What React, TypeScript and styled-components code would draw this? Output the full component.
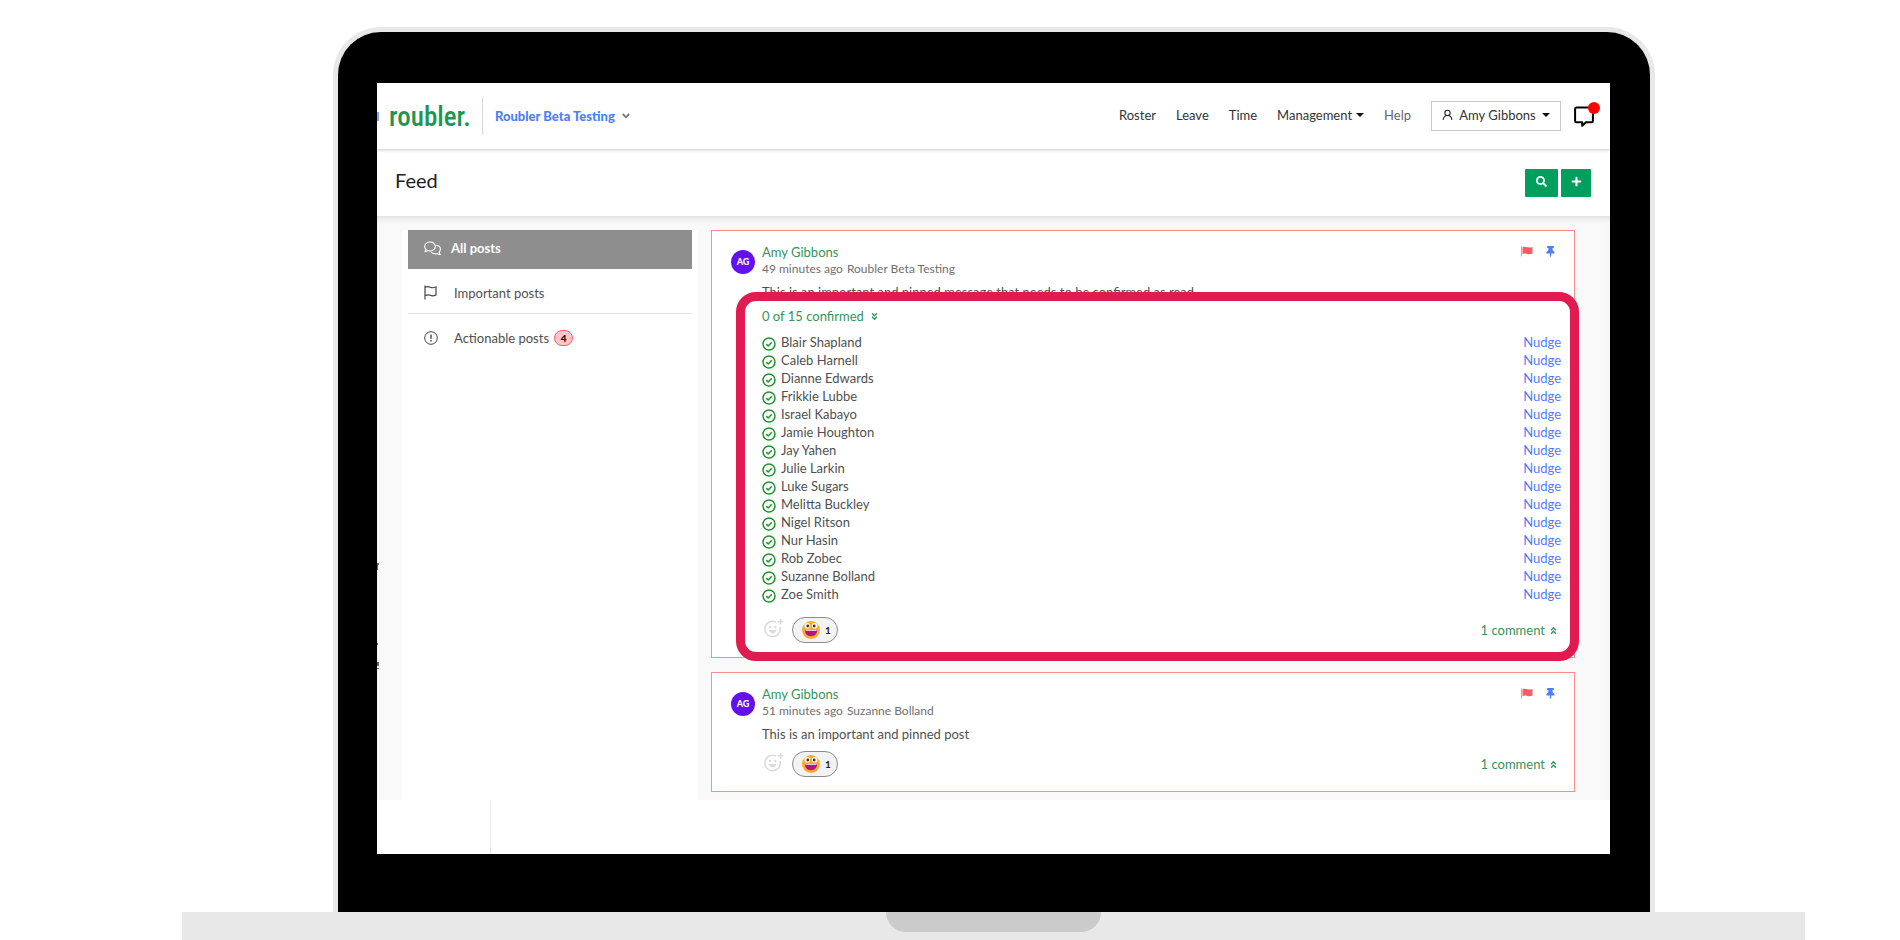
import React from "react";
import styled, { createGlobalStyle } from "styled-components";
import { FaAngleDoubleDown, FaAngleDoubleUp, FaPlus, FaSearch, FaThumbtack } from "react-icons/fa";

const GlobalStyle = createGlobalStyle`
  * { box-sizing: border-box; }
  body { margin: 0; background: #fff; font-family: Lato, "Open Sans", sans-serif; color: #505050; }
  button, select { font: inherit; color: inherit; }
  a { color: inherit; text-decoration: none; }
  h1, h2, p, ul { margin: 0; padding: 0; font-weight: 400; }
  ul { list-style: none; }
  svg { display: block; flex: none; }
`;

const Page = styled.div`
  min-height: 100vh;
  padding-top: 27px;
  overflow: hidden;
  display: flex;
  flex-direction: column;
`;

const Lid = styled.div`
  flex: 1;
  margin: 0 245px 0 333px;
  padding: 51px 40px 58px 39px;
  border: 5px solid #e8e8e8;
  border-bottom: 0;
  border-radius: 48px 48px 0 0;
  background: #000;
`;

const Base = styled.div`
  height: 28px;
  margin: 0 95px 0 182px;
  background: #e8e8e8;
  display: flex;
  justify-content: center;
`;

const Notch = styled.div`
  width: 215px;
  height: 20px;
  border-radius: 0 0 20px 20px;
  background: #cbcbcb;
`;

const Screen = styled.div`
  position: relative;
  background: #fff;
  overflow: hidden;
`;

const TopBar = styled.header`
  height: 66px;
  display: flex;
  align-items: center;
  padding-right: 16px;
  box-shadow: 0 1px 3px rgba(0, 0, 0, 0.22);
  position: relative;
`;

const TabEdge = styled.span`
  width: 2px;
  height: 9px;
  background: #7da2f7;
`;

const Logo = styled.a`
  width: 94px;
  padding: 2px 0 0 10px;
  font: 500 27px/36px "Liberation Sans Narrow", "Roboto Condensed", Roboto, sans-serif;
  color: #1f9650;
`;

const Company = styled.button`
  height: 37px;
  display: flex;
  align-items: center;
  gap: 7px;
  margin-left: 9px;
  padding: 0 12px;
  border: 0;
  border-left: 1px solid #d8d8d8;
  background: none;
  font-size: 13px;
  font-weight: 900;
  color: #4a80f8;
`;

const Nav = styled.nav`
  margin-left: auto;
  display: flex;
  align-items: center;
  gap: 20px;
  font-size: 13px;
  color: #333;
`;

const NavLink = styled.a<{ $muted?: boolean }>`
  display: flex;
  align-items: center;
  gap: 4px;
  padding-bottom: 3px;
  line-height: 18px;
  color: ${(p) => (p.$muted ? "#666" : "#333")};
`;

const Caret = styled.span`
  border: 4px solid transparent;
  border-top-color: #111;
  border-bottom: 0;
`;

const UserButton = styled.button`
  width: 130px;
  height: 30px;
  display: flex;
  align-items: center;
  justify-content: space-between;
  padding: 0 10px 2px;
  border: 1px solid #c8c8c8;
  background: #fff;
  font-size: 13px;
  color: #333;
`;

const ChatButton = styled.button`
  position: relative;
  margin-left: -7px;
  padding: 0;
  border: 0;
  background: none;
`;

const Alert = styled.span`
  position: absolute;
  top: -4px;
  right: -6px;
  width: 12px;
  height: 12px;
  border-radius: 50%;
  background: #f00;
`;

const TitleBar = styled.div`
  height: 67px;
  display: flex;
  align-items: center;
  gap: 3px;
  padding: 0 19px 0 18px;
`;

const Title = styled.h1`
  flex: 1;
  font-size: 20px;
  line-height: 24px;
  padding-bottom: 6px;
  color: #222;
`;

const Action = styled.button<{ $wide?: boolean }>`
  width: ${(p) => (p.$wide ? 33 : 30)}px;
  height: 28px;
  display: grid;
  place-items: center;
  padding: 0 0 2px;
  border: 0;
  border-radius: 1px;
  background: #009f5d;
  color: #fff;
`;

const Content = styled.div`
  display: flex;
  gap: 13px;
  min-height: 584px;
  padding: 14px 35px 0 25px;
  background: #f9f9f9;
  box-shadow: inset 0 6px 6px -3px rgba(0, 0, 0, 0.1);
`;

const Sidebar = styled.aside`
  width: 296px;
  padding: 0 6px;
  background: #fff;
`;

const SideItem = styled.a<{ $active?: boolean; $ruled?: boolean }>`
  height: ${(p) => (p.$active ? 39 : 45)}px;
  display: flex;
  align-items: center;
  gap: ${(p) => (p.$active ? 10 : 16)}px;
  padding: ${(p) => (p.$active ? "0 16px 3px" : "3px 16px 0")};
  font-size: 13px;
  line-height: 18px;
  background: ${(p) => (p.$active ? "#8e8e8e" : "none")};
  color: ${(p) => (p.$active ? "#fff" : "#505050")};
  font-weight: ${(p) => (p.$active ? 700 : 400)};
  border-bottom: ${(p) => (p.$ruled ? "1px solid #e2e2e2" : "0")};

  svg { margin-right: ${(p) => (p.$ruled ? 1 : 0)}px; }
`;

const Count = styled.span`
  width: 19px;
  height: 16px;
  margin-left: -11px;
  border: 1px solid #fb5f66;
  border-radius: 8px;
  background: #fdc6ca;
  font-size: 10px;
  font-weight: 900;
  line-height: 14px;
  text-align: center;
  color: #111;
`;

const Feed = styled.main`
  flex: 1;
  display: flex;
  flex-direction: column;
  gap: 14px;
  padding-bottom: 8px;
`;

const Card = styled.article`
  position: relative;
  display: flex;
  gap: 7px;
  padding: 12px 13px 14px 19px;
  border: 1px solid #fb8f8f;
  background: #fff;
`;

const Avatar = styled.div`
  width: 24px;
  height: 24px;
  margin-top: 7px;
  border-radius: 50%;
  background: #6310f0;
  color: #fff;
  font-size: 9px;
  font-weight: 900;
  line-height: 24px;
  text-align: center;
`;

const Body = styled.div`
  flex: 1;
  font-size: 13px;
  line-height: 18px;
`;

const Head = styled.div`
  display: flex;
  justify-content: space-between;
`;

const Author = styled.a`
  color: #36935a;
`;

const Marks = styled.div`
  display: flex;
  gap: 12px;
  padding: 3px 5px 0 0;
`;

const Meta = styled.p`
  display: flex;
  gap: 4px;
  font-size: 12px;
  line-height: 16px;
  color: #707070;
`;

const Message = styled.p`
  margin-top: 6px;
`;

const Confirmed = styled.button`
  display: flex;
  align-items: center;
  gap: 6px;
  margin-top: 6px;
  padding: 0;
  border: 0;
  background: none;
  line-height: 18px;
  color: #36935a;
`;

const People = styled.ul`
  margin: 8px 0 14px;
`;

const Person = styled.li`
  display: flex;
  align-items: center;
  gap: 5px;

  svg { margin-top: 3px; }
`;

const Nudge = styled.button`
  margin-left: auto;
  padding: 0;
  border: 0;
  background: none;
  line-height: 18px;
  color: #4f7df9;
`;

const Reactions = styled.div`
  display: flex;
  align-items: center;
  gap: 8px;
  margin-top: 8px;
`;

const IconButton = styled.button`
  padding: 0 0 4px 2px;
  border: 0;
  background: none;
`;

const Pill = styled.button`
  width: 46px;
  height: 26px;
  display: flex;
  align-items: center;
  gap: 4px;
  padding: 0 0 0 8px;
  border: 1px solid #8c8c8c;
  border-radius: 13px;
  background: #f3f3f3;
  font-size: 10px;
  font-weight: 700;
  color: #222;
`;

const Comments = styled.button`
  display: flex;
  align-items: center;
  gap: 4px;
  margin-left: auto;
  padding: 0 3px 0 0;
  border: 0;
  background: none;
  color: #36935a;
`;

const Highlight = styled.div`
  position: absolute;
  inset: 61px -5px -4px 24px;
  border: 9px solid #e11a50;
  border-radius: 20px;
  pointer-events: none;
`;

const Footer = styled.footer`
  height: 54px;
  display: flex;
`;

const FooterColumn = styled.div`
  width: 114px;
  border-right: 1px solid #e8e8e8;
`;

const EdgeMarks = styled.svg`
  position: absolute;
  left: 0;
  top: 479px;
`;

const UserIcon = () => (
  <svg width="11" height="12" viewBox="0 0 12 12" fill="none" stroke="#222" strokeWidth="1.1">
    <circle cx="6" cy="3.7" r="2.9" />
    <path d="M1.3 11.5c0-2.8 1.7-4.9 4.7-4.9s4.7 2.1 4.7 4.9" />
  </svg>
);

const ChatIcon = () => (
  <svg width="20" height="21" viewBox="0 0 20 21" fill="none" stroke="#000" strokeWidth="2" strokeLinejoin="round">
    <path d="M2.5 1.5h15a1.400 1.400 0 0 1 1.400 1.400v12a1.400 1.400 0 0 1-1.400 1.400H12L8.200 19.800V16.300H2.500a1.400 1.400 0 0 1-1.400-1.400v-12a1.400 1.400 0 0 1 1.400-1.400z" />
  </svg>
);

const TalkIcon = () => (
  <svg width="17" height="15" viewBox="0 0 17 15" fill="none" stroke="#fff" strokeWidth="1.100" strokeLinejoin="round">
    <path d="M1 10.500c.7-.7 1-1.400 1.100-2C1.100 7.600.6 6.600.6 5.500.6 3 3 1 6 1s5.400 2 5.400 4.500S9 10 6 10c-.8 0-1.500-.1-2.200-.4-.8.5-1.700.9-2.800.9z" />
    <path d="M12.200 4.300c2.400.3 4.200 2 4.200 4 0 1-.4 1.900-1.200 2.700.1.900.5 1.800 1.100 2.600-1.200 0-2.200-.4-3-1-.6.2-1.200.3-1.900.3-1.900 0-3.600-.8-4.500-2.100" />
  </svg>
);

const OutlineFlag = () => (
  <svg width="13" height="15" viewBox="0 0 13 15" fill="none" stroke="#444" strokeWidth="1.200">
    <path d="M1 .5v14M1 2.200c2-1 3.700-.8 5.300 0s3.500.7 5.700-.2v8c-2.200 1-4 1-5.700.3S3 9.600 1 10.600" />
  </svg>
);

const WarnIcon = () => (
  <svg width="14" height="14" viewBox="0 0 14 14" fill="none" stroke="#444" strokeWidth="1">
    <circle cx="7" cy="7" r="6.300" />
    <path d="M7 3.500v4.300M7 9v1.500" strokeWidth="1.400" />
  </svg>
);

const CheckIcon = () => (
  <svg width="14" height="14" viewBox="0 0 14 14" fill="none" stroke="#22932f" strokeWidth="1.500">
    <circle cx="7" cy="7" r="6" />
    <path d="M4.200 7.100l2 1.900 3.600-3.800" />
  </svg>
);

const SolidFlag = () => (
  <svg width="12" height="11" viewBox="0 0 12 11">
    <path d="M.5.500v10" stroke="#ff8a8c" />
    <path d="M1.500 1.200c1.800-.8 3.200-.5 4.800 0 1.700.500 3.200.400 5.200-.200v6.600c-2 .8-3.600.8-5.200.3-1.700-.600-3-.600-4.800.1z" fill="#ff5a5f" />
  </svg>
);

const AddReactionIcon = () => (
  <svg width="20" height="19" viewBox="0 0 20 19" fill="none" stroke="#dcdcdc" strokeWidth="1.500">
    <path d="M12 3.100A7.700 7.700 0 1 0 16 8" />
    <path d="M16.500 0v5.600M13.700 2.800h5.600" />
    <path d="M4.700 11c1.500 4.500 6.700 4.500 8 0z" fill="#dcdcdc" stroke="none" />
    <circle cx="6" cy="8" r="1.200" fill="#dcdcdc" stroke="none" />
    <circle cx="11.300" cy="8" r="1.200" fill="#dcdcdc" stroke="none" />
  </svg>
);

const GrinIcon = () => (
  <svg width="20" height="20" viewBox="0 0 20 20">
    <circle cx="10" cy="10" r="9" fill="#fcab2c" />
    <circle cx="6.300" cy="5.800" r="2.800" fill="#fff" />
    <circle cx="13.700" cy="5.800" r="2.800" fill="#fff" />
    <circle cx="6.800" cy="6" r="1.400" fill="#4b2b1d" />
    <circle cx="13.200" cy="6" r="1.400" fill="#4b2b1d" />
    <path d="M4 10h12c.3 3.600-2.300 6.200-6 6.200S3.700 13.600 4 10z" fill="#b5157d" />
    <path d="M4.500 10h11v.9h-11z" fill="#f6d9e4" />
  </svg>
);

const Chevron = () => (
  <svg width="8" height="6" viewBox="0 0 8 6" fill="none" stroke="#777" strokeWidth="1.800">
    <path d="M.8 1l3.200 3.300L7.200 1" />
  </svg>
);

const PEOPLE = [
  "Blair Shapland", "Caleb Harnell", "Dianne Edwards", "Frikkie Lubbe", "Israel Kabayo",
  "Jamie Houghton", "Jay Yahen", "Julie Larkin", "Luke Sugars", "Melitta Buckley",
  "Nigel Ritson", "Nur Hasin", "Rob Zobec", "Suzanne Bolland", "Zoe Smith",
];

interface PostProps {
  time: string;
  audience: string;
  message: string;
  people?: string[];
  highlighted?: boolean;
}

const Post = ({ time, audience, message, people, highlighted }: PostProps) => (
  <Card>
    <Avatar>AG</Avatar>
    <Body>
      <Head>
        <Author href="#amy">Amy Gibbons</Author>
        <Marks>
          <SolidFlag />
          <FaThumbtack size={11} color="#4a80f8" />
        </Marks>
      </Head>
      <Meta>
        <span>{time}</span>
        <span>{audience}</span>
      </Meta>
      <Message>{message}</Message>
      {people && (
        <>
          <Confirmed>
            0 of {people.length} confirmed
            <FaAngleDoubleDown size={9} />
          </Confirmed>
          <People>
            {people.map((name) => (
              <Person key={name}>
                <CheckIcon />
                <span>{name}</span>
                <Nudge>Nudge</Nudge>
              </Person>
            ))}
          </People>
        </>
      )}
      <Reactions>
        <IconButton aria-label="Add reaction"><AddReactionIcon /></IconButton>
        <Pill><GrinIcon />1</Pill>
        <Comments>1 comment <FaAngleDoubleUp size={9} /></Comments>
      </Reactions>
    </Body>
    {highlighted && <Highlight />}
  </Card>
);

export default function App() {
  return (
    <Page>
      <GlobalStyle />
      <Lid>
        <Screen>
          <TopBar>
            <TabEdge />
            <Logo href="#home">roubler.</Logo>
            <Company>Roubler Beta Testing <Chevron /></Company>
            <Nav>
              <NavLink href="#roster">Roster</NavLink>
              <NavLink href="#leave">Leave</NavLink>
              <NavLink href="#time">Time</NavLink>
              <NavLink href="#management">Management <Caret /></NavLink>
              <NavLink href="#help" $muted>Help</NavLink>
              <UserButton><UserIcon />Amy Gibbons<Caret /></UserButton>
              <ChatButton aria-label="Messages"><ChatIcon /><Alert /></ChatButton>
            </Nav>
          </TopBar>
          <TitleBar>
            <Title>Feed</Title>
            <Action $wide aria-label="Search"><FaSearch size={11} /></Action>
            <Action aria-label="Add post"><FaPlus size={11} /></Action>
          </TitleBar>
          <Content>
            <Sidebar>
              <SideItem href="#all" $active><TalkIcon />All posts</SideItem>
              <SideItem href="#important" $ruled><OutlineFlag />Important posts</SideItem>
              <SideItem href="#actionable"><WarnIcon />Actionable posts<Count>4</Count></SideItem>
            </Sidebar>
            <Feed>
              <Post
                time="49 minutes ago"
                audience="Roubler Beta Testing"
                message="This is an important and pinned message that needs to be confirmed as read"
                people={PEOPLE}
                highlighted
              />
              <Post time="51 minutes ago" audience="Suzanne Bolland" message="This is an important and pinned post" />
            </Feed>
          </Content>
          <Footer><FooterColumn /></Footer>
          <EdgeMarks width="2" height="110" viewBox="0 0 2 110" fill="#666">
            <path d="M0 1h2v2H1v5H0zM0 81h1v2H0zM0 100h2v4H0zM0 106h2v1H0z" />
          </EdgeMarks>
        </Screen>
      </Lid>
      <Base><Notch /></Base>
    </Page>
  );
}
